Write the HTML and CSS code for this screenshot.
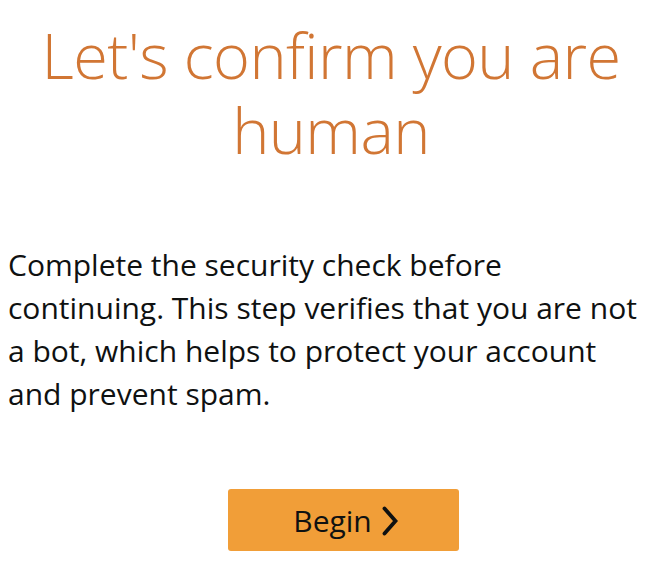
FILE: index.html
```html
<!DOCTYPE html>
<html>
  <head>
    <meta charset="utf-8" />
    <meta name="viewport" content="width=device-width, initial-scale=1" />
    <link rel="stylesheet" href="styles.css">
  </head>
  <body>
    <div class="page">
      <h1 class="title">Let's confirm you are human</h1>
      <p class="intro">
        Complete the security check before continuing. This step verifies
        that you are not a bot, which helps to protect your account and
        prevent spam.
      </p>
      <div class="actions">
        <button class="begin-btn" type="button">
          Begin
          <svg class="chevron" width="16" height="30" viewBox="0 0 16 30" aria-hidden="true">
            <path d="M2.5 2.5 L13.5 15 L2.5 27.5" fill="none" stroke="#0f1111" stroke-width="3.8" stroke-linecap="round" stroke-linejoin="miter" />
          </svg>
        </button>
      </div>
    </div>
  </body>
</html>
```
FILE: styles.css
```css
html,
body {
  margin: 0;
  padding: 0;
  background: #fff;
}

.page {
  padding: 17px 8px 0;
  font-family: "Open Sans", "Noto Sans", sans-serif;
  color: #0f1111;
}

.title {
  margin: 0;
  text-align: center;
  font-size: 63px;
  font-weight: 300;
  line-height: 75px;
  letter-spacing: -0.6px;
  color: #d17634;
}

.intro {
  margin: 76px 0 0;
  font-size: 30px;
  line-height: 43px;
}

.actions {
  display: flex;
  justify-content: center;
  padding-left: 25px;
  margin-top: 74px;
}

.begin-btn {
  display: flex;
  align-items: center;
  justify-content: center;
  gap: 10px;
  width: 231px;
  height: 62px;
  padding: 0 0 0 4px;
  border: 0;
  border-radius: 3px;
  background: #f19e38;
  font-family: inherit;
  font-size: 30px;
  color: #0f1111;
  cursor: pointer;
}

.chevron {
  display: block;
  margin-top: 1px;
}
```
